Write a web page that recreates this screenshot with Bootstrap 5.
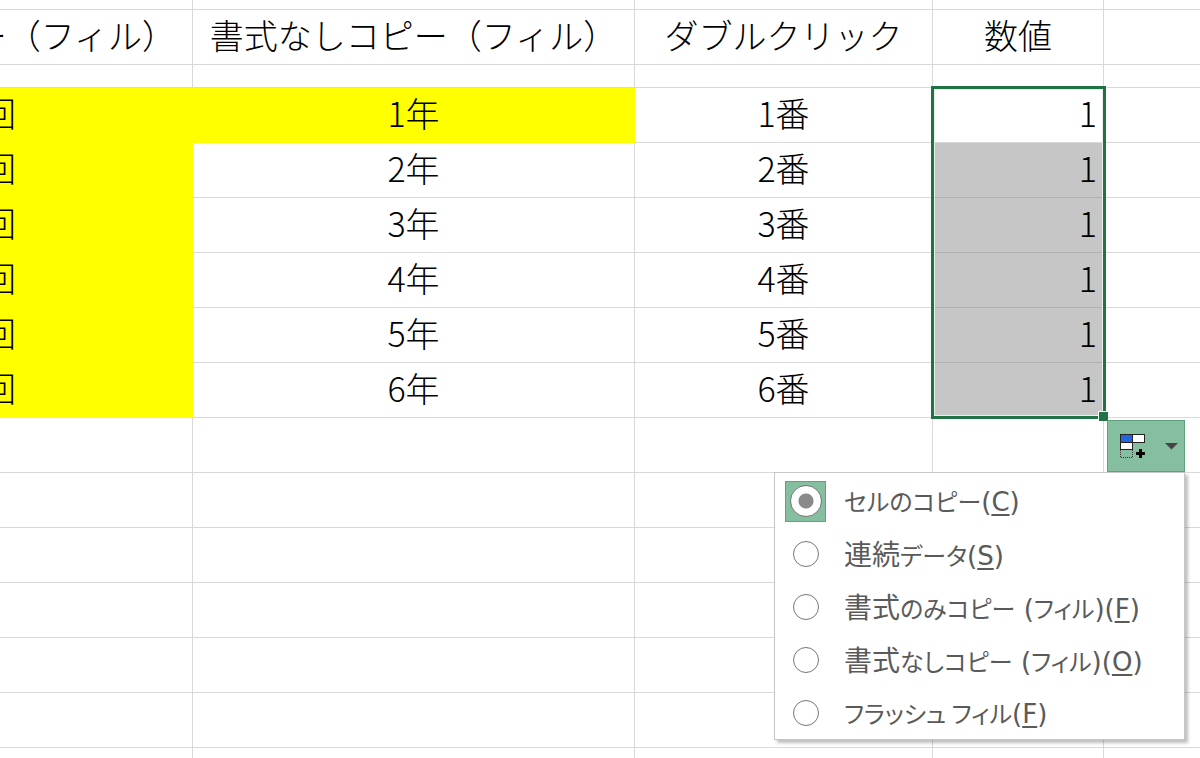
<!DOCTYPE html>
<html lang="ja">
<head>
<meta charset="utf-8">
<meta name="viewport" content="width=device-width, initial-scale=1">
<title>オートフィル</title>
<link href="https://cdn.jsdelivr.net/npm/bootstrap@5.3.0/dist/css/bootstrap.min.css" rel="stylesheet">
<style>
  body { font-family: "Noto Sans CJK JP", sans-serif; background: #fff; color: #000; }
  .sheet { table-layout: fixed; border-collapse: separate; border-spacing: 0; font-size: 34px; line-height: 50px; }
  .sheet th, .sheet td { height: 55px; padding: 0 0 4px; font-weight: 300; white-space: nowrap; text-align: center;
    border: solid #d9d9d9; border-width: 0 1px 1px 0; }
  .sheet tr > :last-child { border-right-width: 0; }
  .sheet .row-edge > * { height: 10px; }
  .sheet .row-thin > * { height: 23px; }
  .sheet .row-last > * { border-bottom-width: 0; }
  .col-a { width: 193px; } .col-b { width: 442px; } .col-c { width: 298px; } .col-d { width: 171px; }
  .clip-title { padding-right: 16px; }
  .clip-count { padding-right: 176px; }
  .sheet .fill-yellow { background: #ff0; border-color: #ff0; }
  .sheet .num { text-align: right; padding-right: 6px; }
  .sheet .picked { background: #c6c6c6; border-bottom-color: #b0b0b0; }
  .selection { top: -2px; left: -2px; right: -3px; height: calc(600% + 9px); border: 3px solid #217346;
    box-shadow: inset 0 0 0 1px #e6efe9; pointer-events: none; z-index: 2; }
  .selection::after { content: ""; position: absolute; right: -5px; bottom: -5px; width: 10px; height: 10px;
    background: #217346; border: solid #fff; border-width: 1px 0 0 1px; }
  .fill-options { top: 2px; left: 3px; z-index: 3; }
  .fill-btn { width: 78px; height: 52px; background: #86bf9f; border: 1px solid #5fa37e; }
  .fill-menu { top: 100%; right: 0; width: 411px; padding-top: 1px; border: 1px solid #c6c6c6;
    box-shadow: 3px 3px 3px rgba(0,0,0,.25); background: #fff; }
  .fill-item { height: 53px; padding: 1px 0 0 10px; gap: 18px; color: #5a5a5a; cursor: pointer;
    font: 400 26px/40px "DejaVu Sans", "Noto Sans CJK JP", sans-serif; }
  .fill-item .kana, .fill-item .kanji { font-family: "Noto Sans CJK JP", sans-serif; font-feature-settings: "palt"; }
  .fill-item .kana { font-size: 24px; }
  .fill-item .kanji { font-size: 28px; }
  .fill-item u { text-decoration-thickness: 2px; text-underline-offset: 3px; }
  .radio-box { width: 41px; height: 41px; border: 1px solid transparent; }
  .radio-box:has(:checked) { background: #86bf9f; border-color: #5fa37e; }
  .radio-box input { appearance: none; width: 26px; height: 26px; margin: 0; border: 1px solid #777; border-radius: 50%; background: #fff; }
  .radio-box input:checked { width: 32px; height: 32px; background: radial-gradient(circle, #8a8a8a 7px, #fff 8px); }
</style>
</head>
<body class="overflow-hidden">
<table class="sheet w-100">
  <colgroup><col class="col-a"><col class="col-b"><col class="col-c"><col class="col-d"><col></colgroup>
  <tbody>
    <tr class="row-edge"><td></td><td></td><td></td><td></td><td></td></tr>
    <tr>
      <th><div class="d-flex justify-content-end overflow-hidden clip-title">ー（フィル）</div></th>
      <th>書式なしコピー（フィル）</th><th>ダブルクリック</th><th>数値</th><td></td>
    </tr>
    <tr class="row-thin"><td></td><td></td><td></td><td></td><td></td></tr>
    <tr>
      <td class="fill-yellow"><div class="d-flex justify-content-end overflow-hidden clip-count">回</div></td>
      <td class="fill-yellow">1年</td><td>1番</td>
      <td class="num position-relative">1<div class="selection position-absolute"></div></td><td></td>
    </tr>
    <tr><td class="fill-yellow"><div class="d-flex justify-content-end overflow-hidden clip-count">回</div></td><td>2年</td><td>2番</td><td class="num picked">1</td><td></td></tr>
    <tr><td class="fill-yellow"><div class="d-flex justify-content-end overflow-hidden clip-count">回</div></td><td>3年</td><td>3番</td><td class="num picked">1</td><td></td></tr>
    <tr><td class="fill-yellow"><div class="d-flex justify-content-end overflow-hidden clip-count">回</div></td><td>4年</td><td>4番</td><td class="num picked">1</td><td></td></tr>
    <tr><td class="fill-yellow"><div class="d-flex justify-content-end overflow-hidden clip-count">回</div></td><td>5年</td><td>5番</td><td class="num picked">1</td><td></td></tr>
    <tr><td class="fill-yellow"><div class="d-flex justify-content-end overflow-hidden clip-count">回</div></td><td>6年</td><td>6番</td><td class="num picked">1</td><td></td></tr>
    <tr>
      <td></td><td></td><td></td><td></td>
      <td class="position-relative">
        <div class="fill-options position-absolute text-start">
          <button type="button" class="fill-btn d-flex align-items-center justify-content-between rounded-0 py-0 ps-2 pe-1" aria-label="オートフィル オプション" aria-expanded="true">
            <svg width="36" height="36" viewBox="0 0 36 36" shape-rendering="crispEdges" aria-hidden="true">
              <rect x="4.500" y="6.500" width="12" height="8" fill="#1f66e0" stroke="#222"/>
              <rect x="16.500" y="6.500" width="12" height="8" fill="#fff" stroke="#222"/>
              <rect x="4.500" y="14.500" width="12" height="7" fill="#fff" stroke="#222"/>
              <path d="M4.500 22v7.500h12V22" fill="none" stroke="#333" stroke-dasharray="1 1"/>
              <path d="M23 21h3v3h3v3h-3v3h-3v-3h-3v-3h3z" fill="#000"/>
            </svg>
            <svg width="16" height="8" viewBox="0 0 16 8" aria-hidden="true"><path d="M1 1h13L7.500 7.500z" fill="#444"/></svg>
          </button>
          <div class="fill-menu position-absolute">
            <label class="fill-item d-flex align-items-center"><span class="radio-box d-flex align-items-center justify-content-center"><input type="radio" name="fill" checked></span><span><span class="kana">セルのコピー</span>(<u>C</u>)</span></label>
            <label class="fill-item d-flex align-items-center"><span class="radio-box d-flex align-items-center justify-content-center"><input type="radio" name="fill"></span><span><span class="kanji">連続</span><span class="kana">データ</span>(<u>S</u>)</span></label>
            <label class="fill-item d-flex align-items-center"><span class="radio-box d-flex align-items-center justify-content-center"><input type="radio" name="fill"></span><span><span class="kanji">書式</span><span class="kana">のみコピー</span> (<span class="kana">フィル</span>)(<u>F</u>)</span></label>
            <label class="fill-item d-flex align-items-center"><span class="radio-box d-flex align-items-center justify-content-center"><input type="radio" name="fill"></span><span><span class="kanji">書式</span><span class="kana">なしコピー</span> (<span class="kana">フィル</span>)(<u>O</u>)</span></label>
            <label class="fill-item d-flex align-items-center"><span class="radio-box d-flex align-items-center justify-content-center"><input type="radio" name="fill"></span><span><span class="kana">フラッシュ フィル</span>(<u>F</u>)</span></label>
          </div>
        </div>
      </td>
    </tr>
    <tr><td></td><td></td><td></td><td></td><td></td></tr>
    <tr><td></td><td></td><td></td><td></td><td></td></tr>
    <tr><td></td><td></td><td></td><td></td><td></td></tr>
    <tr><td></td><td></td><td></td><td></td><td></td></tr>
    <tr><td></td><td></td><td></td><td></td><td></td></tr>
    <tr class="row-edge row-last"><td></td><td></td><td></td><td></td><td></td></tr>
  </tbody>
</table>
<script src="https://cdn.jsdelivr.net/npm/bootstrap@5.3.0/dist/js/bootstrap.bundle.min.js"></script>
</body>
</html>
